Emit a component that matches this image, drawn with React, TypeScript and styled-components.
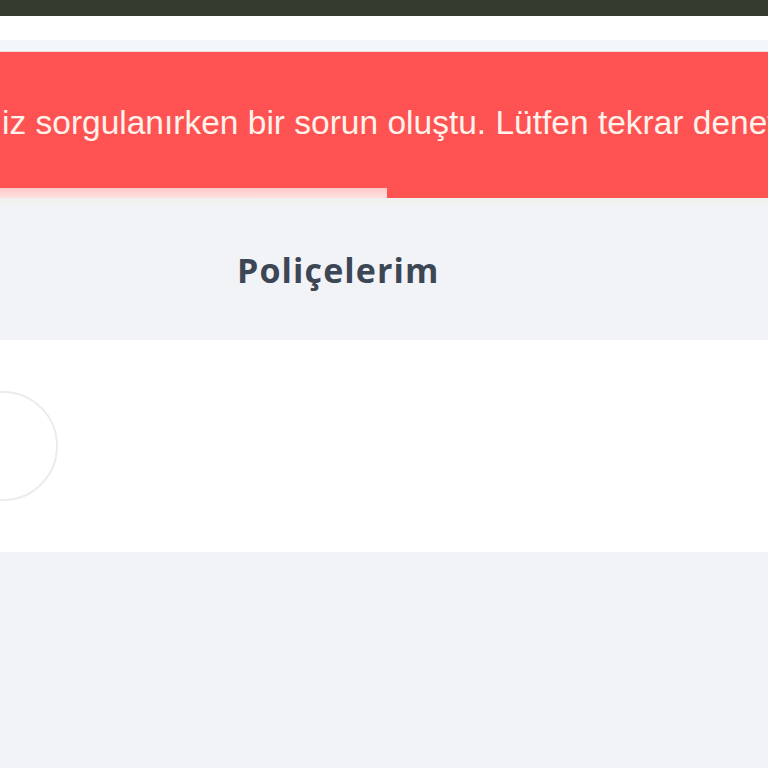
import React from "react";
import styled, { createGlobalStyle } from "styled-components";

const GlobalStyle = createGlobalStyle`
    html, body {
        margin: 0;
        padding: 0;
        background: #f2f3f7;
        overflow: hidden;
    }
`;

const Page = styled.div`
    width: 768px;
    min-height: 768px;
    display: flex;
    flex-direction: column;
    background: #f2f3f7;
    overflow: hidden;
`;

const TopBar = styled.div`
    height: 16px;
    background: #343c2f;
`;

const Header = styled.div`
    height: 24px;
    background: #ffffff;
`;

const HeaderEdge = styled.div`
    height: 11px;
    background: #f1f7fb;
    border-bottom: 1px solid #f6dada;
`;

const Toast = styled.div`
    height: 146px;
    background: #ff5252;
    display: flex;
    flex-direction: column;
    justify-content: flex-end;
    overflow: hidden;
`;

const Message = styled.div`
    flex: 1;
    display: flex;
    align-items: center;
    padding: 5px 0 0 2px;
    white-space: nowrap;
    font-family: "Liberation Sans", Arial, sans-serif;
    font-size: 33.5px;
    color: #fff3ec;
`;

const Progress = styled.div<{ $value: number }>`
    height: 10px;
    width: ${(p) => p.$value}px;
    background: linear-gradient(#ffc9c9, #ffe1e1);
`;

const ToastGap = styled.div`
    height: 7px;
    background: #eef1ed;
`;

const TitleSection = styled.div`
    height: 135px;
    box-sizing: border-box;
    display: flex;
    align-items: center;
    padding: 0 0 6px 237px;
    background: #f2f3f7;
`;

const Title = styled.h1`
    margin: 0;
    font-family: "Open Sans", "DejaVu Sans", sans-serif;
    font-weight: 700;
    font-size: 34px;
    letter-spacing: 1.1px;
    color: #3c4655;
`;

const Card = styled.div`
    height: 212px;
    background: #ffffff;
    display: flex;
    align-items: center;
`;

const Avatar = styled.div`
    width: 106px;
    height: 106px;
    margin-left: -52px;
    border-radius: 50%;
    border: 2px solid #ececec;
    flex-shrink: 0;
`;

export default function App() {
    return (
        <>
            <GlobalStyle />
            <Page>
                <TopBar />
                <Header />
                <HeaderEdge />
                <Toast>
                    <Message>iz sorgulanırken bir sorun oluştu. Lütfen tekrar deneyiniz.</Message>
                    <Progress $value={387} />
                </Toast>
                <ToastGap />
                <TitleSection>
                    <Title>Poliçelerim</Title>
                </TitleSection>
                <Card>
                    <Avatar />
                </Card>
            </Page>
        </>
    );
}
